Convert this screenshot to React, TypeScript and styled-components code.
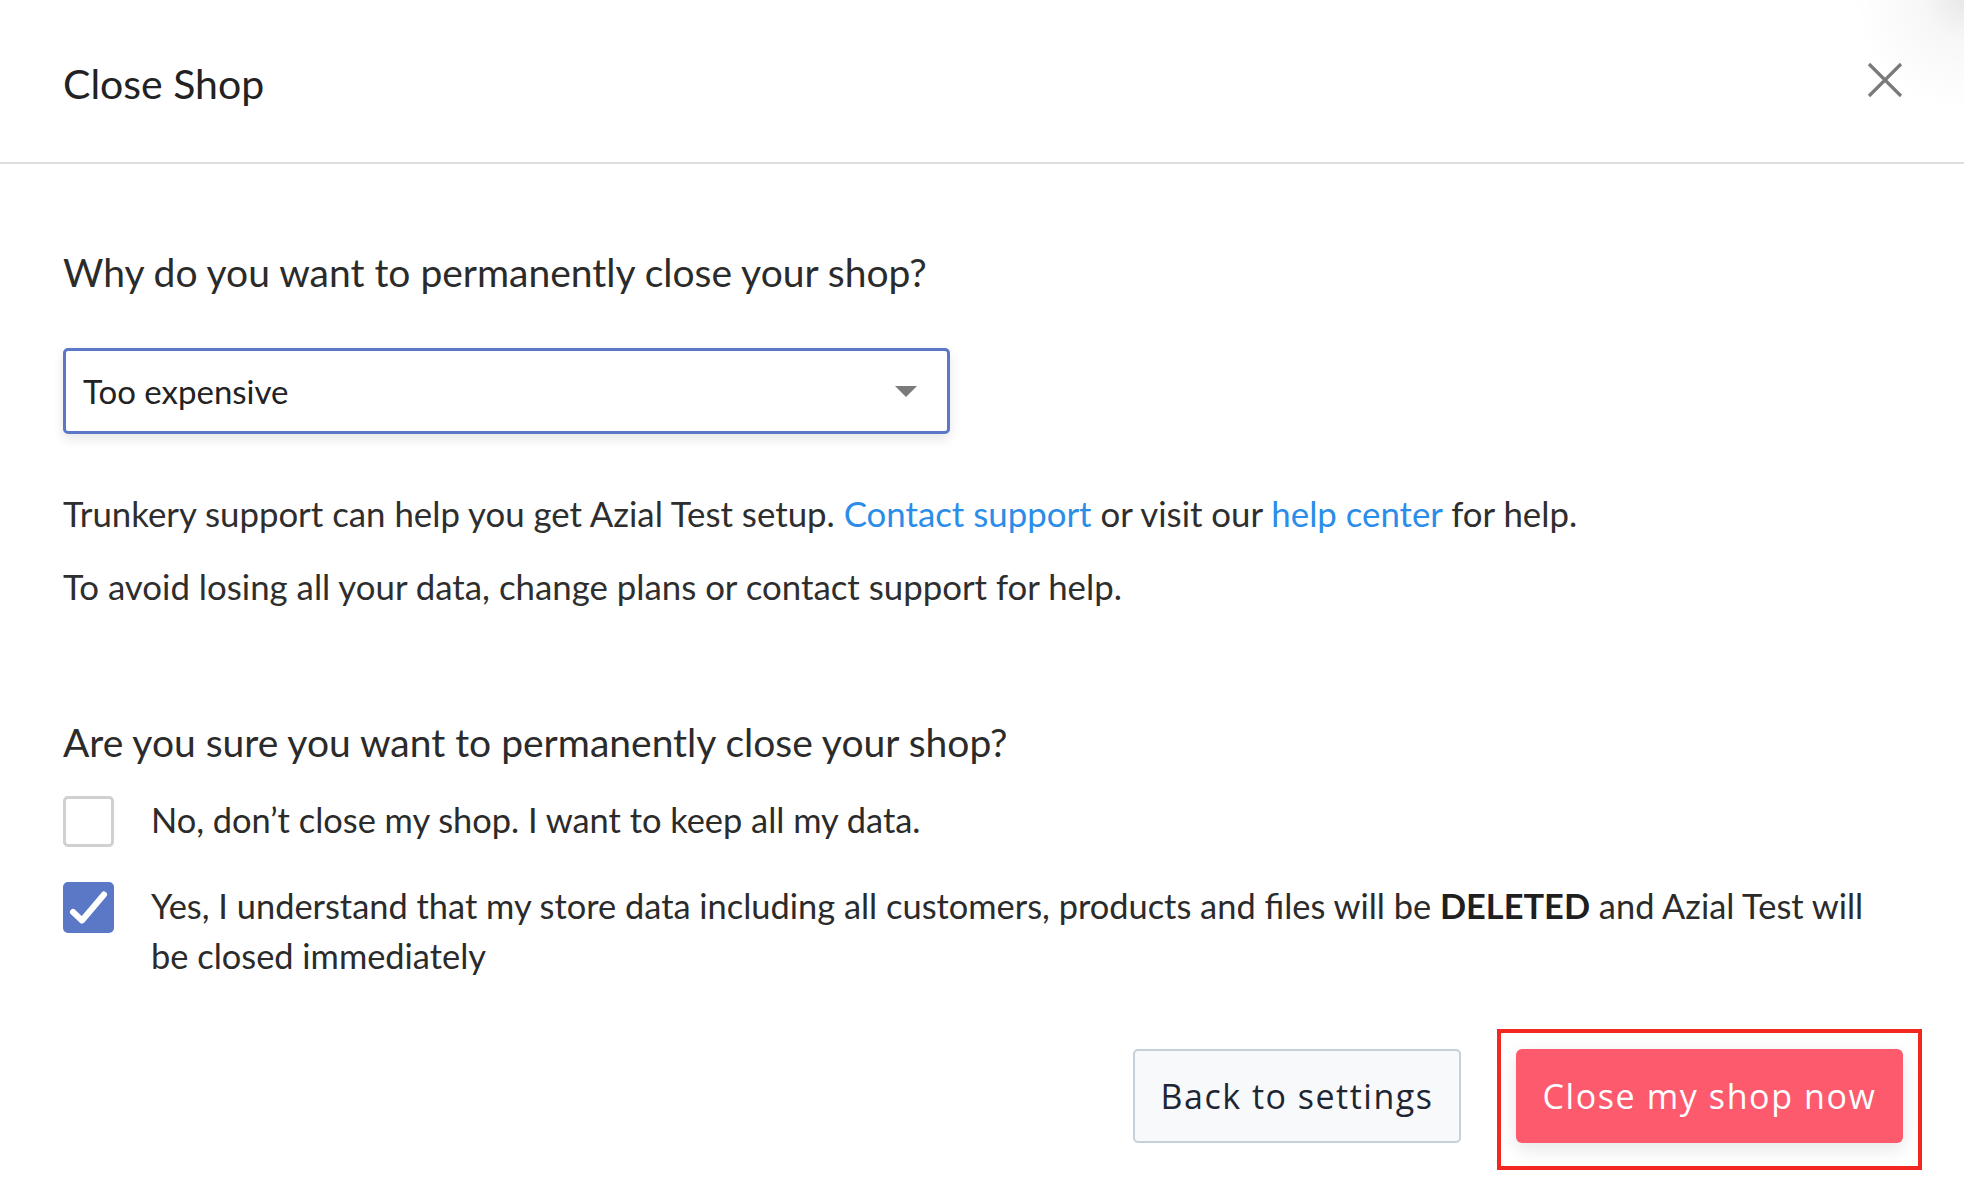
import styled, { createGlobalStyle } from "styled-components";

const GlobalStyle = createGlobalStyle`
  body {
    margin: 0;
    background: #ffffff;
    font-family: "Lato", "Liberation Sans", sans-serif;
    color: #2e2e2e;
  }
`;

function App() {
  return (
    <>
      <GlobalStyle />
      <Modal>
        <Header>
          <Title>Close Shop</Title>
          <CloseButton aria-label="Close">
            <svg width="36" height="36" viewBox="0 0 36 36">
              <path
                d="M2 2 L34 34 M34 2 L2 34"
                stroke="#7a7a7a"
                strokeWidth="3.2"
                fill="none"
              />
            </svg>
          </CloseButton>
        </Header>
        <Body>
          <Question>Why do you want to permanently close your shop?</Question>
          <Select>
            <SelectValue>Too expensive</SelectValue>
            <Caret />
          </Select>
          <Paragraph>
            Trunkery support can help you get Azial Test setup.{" "}
            <Link>Contact support</Link> or visit our <Link>help center</Link>{" "}
            for help.
          </Paragraph>
          <Paragraph gap={33}>
            To avoid losing all your data, change plans or contact support for
            help.
          </Paragraph>
          <Question top={112}>
            Are you sure you want to permanently close your shop?
          </Question>
          <Options>
            <OptionRow>
              <Checkbox checked={false} />
              <OptionLabel>No, don’t close my shop. I want to keep all my data.</OptionLabel>
            </OptionRow>
            <OptionRow>
              <Checkbox checked>
                <svg width="53" height="51" viewBox="0 0 53 51">
                  <path
                    d="M11 30 L20 38.5 L42 12.5"
                    stroke="#ffffff"
                    strokeWidth="6"
                    strokeLinecap="round"
                    strokeLinejoin="round"
                    fill="none"
                  />
                </svg>
              </Checkbox>
              <OptionLabel>
                Yes, I understand that my store data including all customers,
                products and files will be <strong>DELETED</strong> and Azial
                Test will be closed immediately
              </OptionLabel>
            </OptionRow>
          </Options>
          <Actions>
            <SecondaryButton>Back to settings</SecondaryButton>
            <Highlight>
              <DangerButton>Close my shop now</DangerButton>
            </Highlight>
          </Actions>
        </Body>
      </Modal>
    </>
  );
}

const Modal = styled.div`
  width: 1964px;
  min-height: 1204px;
  background: #ffffff;
  box-sizing: border-box;
`;

const Header = styled.div`
  display: flex;
  align-items: center;
  justify-content: space-between;
  padding: 60px 61px 54px 63px;
  border-bottom: 2px solid #dedede;
  background: radial-gradient(
      circle at 100% 0%,
      rgba(0, 0, 0, 0.09) 0px,
      rgba(0, 0, 0, 0.03) 40px,
      rgba(0, 0, 0, 0) 110px
    )
    no-repeat;
`;

const Title = styled.h1`
  margin: 0;
  font-size: 41px;
  line-height: 48px;
  font-weight: 400;
  color: #222222;
`;

const CloseButton = styled.button`
  border: 0;
  background: none;
  padding: 0;
  display: flex;
  margin-top: -8px;
  cursor: pointer;
`;

const Body = styled.div`
  display: flex;
  flex-direction: column;
  align-items: flex-start;
  padding: 85px 61px 0 63px;
`;

const Question = styled.h2<{ top?: number }>`
  margin: ${({ top }) => top ?? 0}px 0 0;
  font-size: 39px;
  line-height: 46px;
  font-weight: 400;
  color: #2b2b2b;
`;

const Select = styled.div`
  margin-top: 53px;
  width: 887px;
  height: 86px;
  box-sizing: border-box;
  border: 3px solid #5a78c6;
  border-radius: 5px;
  box-shadow: 0 5px 12px rgba(0, 0, 0, 0.1);
  display: flex;
  align-items: center;
  justify-content: space-between;
  padding: 0 30px 0 17px;
`;

const SelectValue = styled.span`
  font-size: 33px;
  line-height: 40px;
  color: #222222;
`;

const Caret = styled.span`
  width: 0;
  height: 0;
  border-left: 11px solid transparent;
  border-right: 11px solid transparent;
  border-top: 11px solid #7b7b7b;
`;

const Paragraph = styled.p<{ gap?: number }>`
  margin: ${({ gap }) => gap ?? 60}px 0 0;
  font-size: 34.8px;
  line-height: 40px;
  color: #2e2e2e;
`;

const Link = styled.a`
  color: #2b8de8;
  text-decoration: none;
  cursor: pointer;
`;

const Options = styled.div`
  margin-top: 31px;
  display: flex;
  flex-direction: column;
  gap: 35px;
  width: 100%;
`;

const OptionRow = styled.label`
  display: flex;
  align-items: flex-start;
  gap: 37px;
`;

const Checkbox = styled.span<{ checked: boolean }>`
  flex: none;
  width: 51px;
  height: 51px;
  box-sizing: border-box;
  border-radius: 5px;
  border: 3px solid ${({ checked }) => (checked ? "#5a78c6" : "#d0d0d0")};
  background: ${({ checked }) => (checked ? "#5a78c6" : "#ffffff")};
  display: flex;
  align-items: center;
  justify-content: center;
  svg {
    flex: none;
  }
`;

const OptionLabel = styled.span`
  font-size: 34.4px;
  line-height: 50px;
  color: #2b2b2b;
  padding-right: 30px;
  margin-top: -1px;
  strong {
    font-weight: 700;
    color: #1f1f1f;
  }
`;

const Actions = styled.div`
  margin-top: 48px;
  align-self: stretch;
  display: flex;
  justify-content: flex-end;
  align-items: flex-start;
  gap: 36px;
  margin-right: -19px;
`;

const SecondaryButton = styled.button`
  margin-top: 20px;
  width: 328px;
  height: 94px;
  box-sizing: border-box;
  border: 2px solid #c7cfd9;
  border-radius: 5px;
  background: #f8f9fb;
  color: #1e2533;
  font-family: "Open Sans", "Noto Sans", sans-serif;
  font-size: 34px;
  letter-spacing: 1.5px;
  padding: 0;
  cursor: pointer;
`;

const Highlight = styled.div`
  border: 4px solid #f2271f;
  padding: 16px 15px 23px;
`;

const DangerButton = styled.button`
  display: block;
  width: 387px;
  height: 94px;
  border: 0;
  border-radius: 6px;
  background: #fd5a6e;
  color: #ffffff;
  font-family: "Open Sans", "Noto Sans", sans-serif;
  font-size: 34px;
  letter-spacing: 1.6px;
  padding: 0;
  box-shadow: 0 6px 18px rgba(0, 0, 0, 0.1);
  cursor: pointer;
`;

export default App;
